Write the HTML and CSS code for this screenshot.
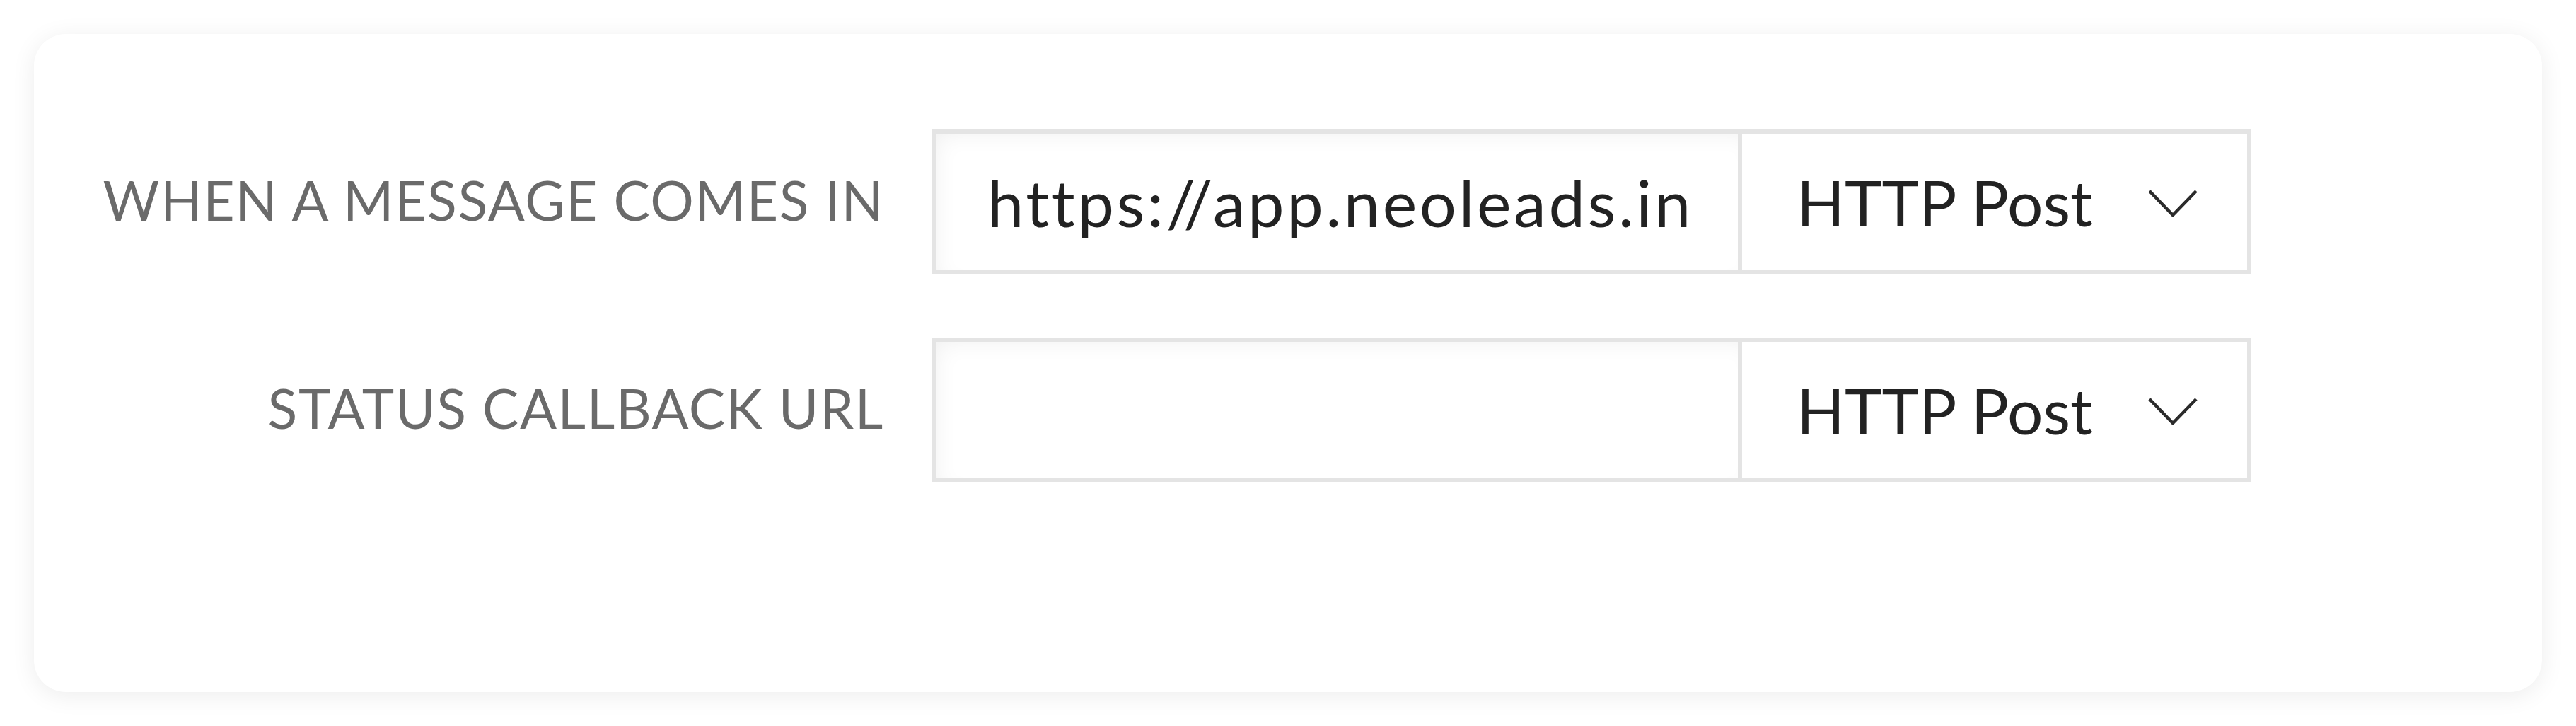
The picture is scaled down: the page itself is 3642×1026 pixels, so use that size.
FILE: index.html
```html
<!DOCTYPE html>
<html lang="en">
<head>
<meta charset="utf-8">
<title>Messaging configuration</title>
<link rel="stylesheet" href="styles.css">
</head>
<body>
  <section class="card">
    <div class="row">
      <label class="label">WHEN A MESSAGE COMES IN</label>
      <div class="group">
        <div class="url">https://app.neoleads.in</div>
        <div class="select">
          <span class="select-text">HTTP Post</span>
          <svg class="chevron" viewBox="0 0 70 39" width="70" height="39" aria-hidden="true">
            <polyline points="2,2 35,36 68,2" fill="none" stroke="#2b2b2b" stroke-width="4.5"/>
          </svg>
        </div>
      </div>
    </div>
    <div class="row">
      <label class="label">STATUS CALLBACK URL</label>
      <div class="group">
        <div class="url"></div>
        <div class="select">
          <span class="select-text">HTTP Post</span>
          <svg class="chevron" viewBox="0 0 70 39" width="70" height="39" aria-hidden="true">
            <polyline points="2,2 35,36 68,2" fill="none" stroke="#2b2b2b" stroke-width="4.5"/>
          </svg>
        </div>
      </div>
    </div>
  </section>
</body>
</html>
```

FILE: styles.css
```css
html, body {
  margin: 0;
  padding: 0;
  background: #ffffff;
}

body {
  padding: 48px;
  font-family: Lato, "Open Sans", "Liberation Sans", sans-serif;
}

.card {
  box-sizing: border-box;
  height: 930px;
  background: #ffffff;
  border-radius: 45px;
  box-shadow: 0 5px 34px rgba(0, 0, 0, 0.075);
  padding-top: 135px;
  display: flex;
  flex-direction: column;
  gap: 90px;
}

.row {
  display: flex;
  align-items: center;
  gap: 67px;
}

.label {
  width: 1202px;
  text-align: right;
  font-size: 77px;
  color: #6a6a6a;
  letter-spacing: 1.6px;
  line-height: 1;
  padding-bottom: 6px;
}

.group {
  display: flex;
  width: 1866px;
  height: 204px;
  box-sizing: border-box;
  border: 6px solid #e4e4e4;
}

.url {
  box-sizing: border-box;
  width: 1140px;
  border-right: 6px solid #e4e4e4;
  padding-left: 73px;
  display: flex;
  align-items: center;
  font-size: 92px;
  letter-spacing: 3.6px;
  color: #222222;
  box-shadow: inset 12px 12px 34px -14px rgba(0, 0, 0, 0.07);
  white-space: nowrap;
}

.select {
  flex: 1;
  display: flex;
  align-items: center;
  justify-content: space-between;
  padding-left: 77px;
  padding-right: 70px;
  background: #ffffff;
}

.select-text {
  font-size: 89px;
  color: #222222;
}

.chevron {
  display: block;
  margin-top: 4px;
}
```
